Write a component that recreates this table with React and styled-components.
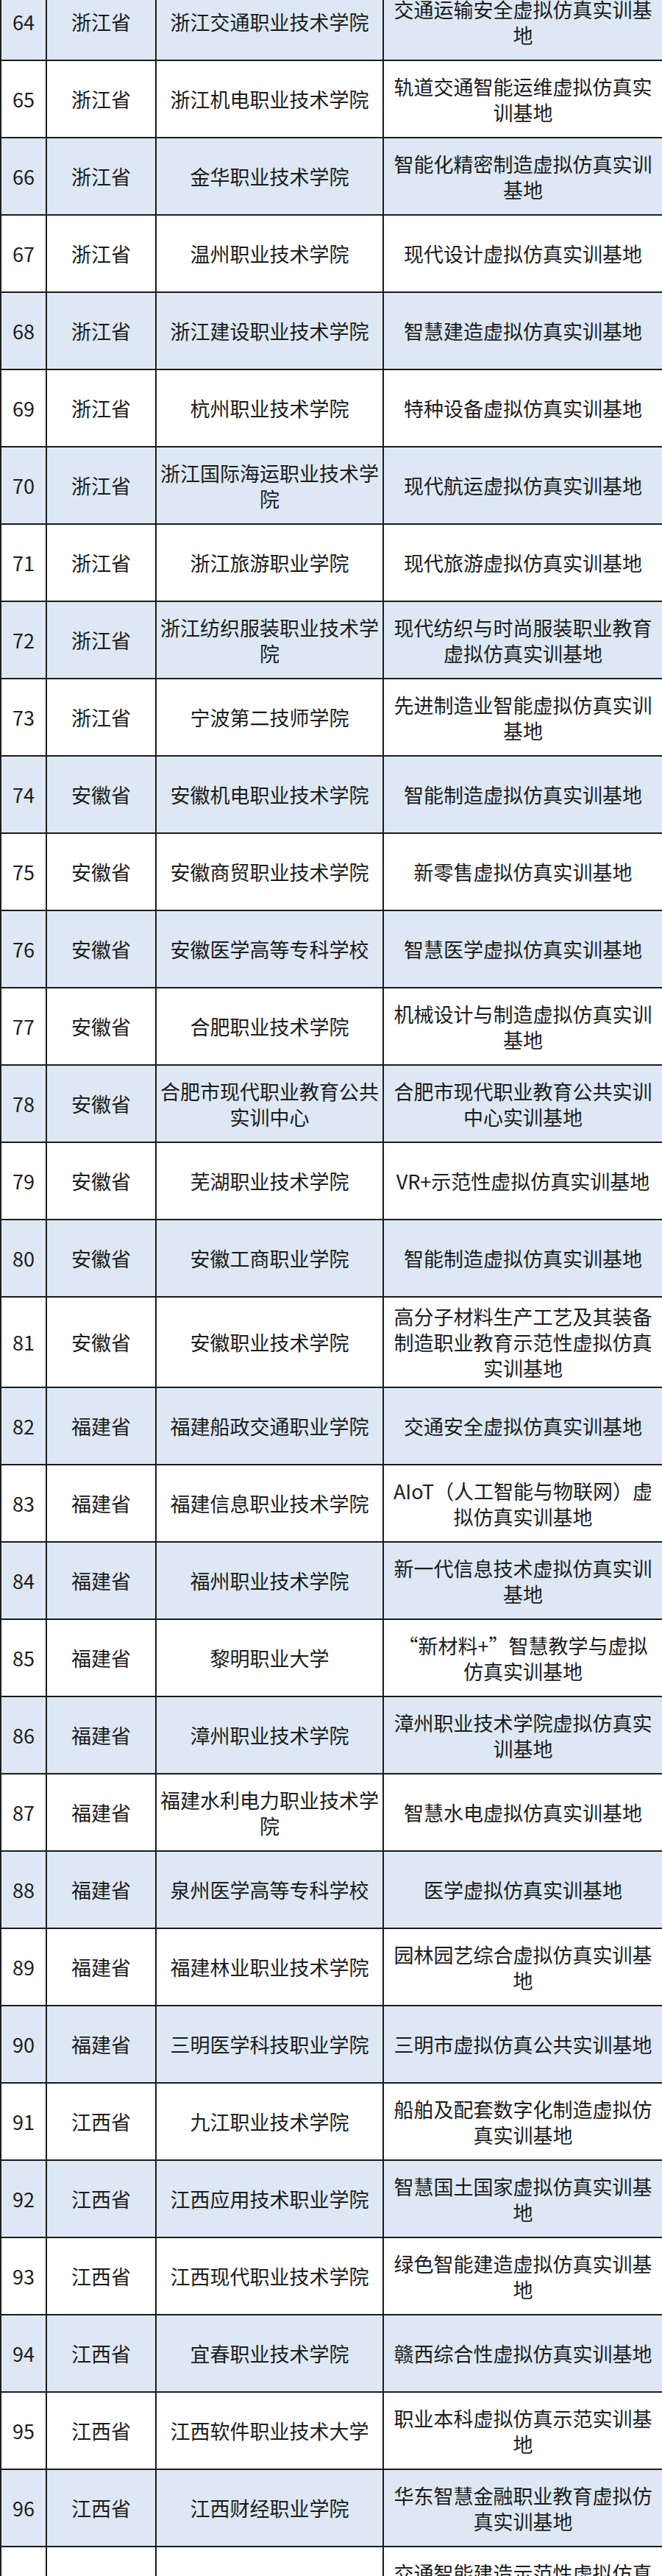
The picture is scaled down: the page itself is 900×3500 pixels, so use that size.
import React from "react";
import styled, { createGlobalStyle } from "styled-components";

const rows = [
  [64, "浙江省", "浙江交通职业技术学院", "交通运输安全虚拟仿真实训基地"],
  [65, "浙江省", "浙江机电职业技术学院", "轨道交通智能运维虚拟仿真实训基地"],
  [66, "浙江省", "金华职业技术学院", "智能化精密制造虚拟仿真实训基地"],
  [67, "浙江省", "温州职业技术学院", "现代设计虚拟仿真实训基地"],
  [68, "浙江省", "浙江建设职业技术学院", "智慧建造虚拟仿真实训基地"],
  [69, "浙江省", "杭州职业技术学院", "特种设备虚拟仿真实训基地"],
  [70, "浙江省", "浙江国际海运职业技术学院", "现代航运虚拟仿真实训基地"],
  [71, "浙江省", "浙江旅游职业学院", "现代旅游虚拟仿真实训基地"],
  [72, "浙江省", "浙江纺织服装职业技术学院", "现代纺织与时尚服装职业教育虚拟仿真实训基地"],
  [73, "浙江省", "宁波第二技师学院", "先进制造业智能虚拟仿真实训基地"],
  [74, "安徽省", "安徽机电职业技术学院", "智能制造虚拟仿真实训基地"],
  [75, "安徽省", "安徽商贸职业技术学院", "新零售虚拟仿真实训基地"],
  [76, "安徽省", "安徽医学高等专科学校", "智慧医学虚拟仿真实训基地"],
  [77, "安徽省", "合肥职业技术学院", "机械设计与制造虚拟仿真实训基地"],
  [78, "安徽省", "合肥市现代职业教育公共实训中心", "合肥市现代职业教育公共实训中心实训基地"],
  [79, "安徽省", "芜湖职业技术学院", "VR+示范性虚拟仿真实训基地"],
  [80, "安徽省", "安徽工商职业学院", "智能制造虚拟仿真实训基地"],
  [81, "安徽省", "安徽职业技术学院", "高分子材料生产工艺及其装备制造职业教育示范性虚拟仿真实训基地"],
  [82, "福建省", "福建船政交通职业学院", "交通安全虚拟仿真实训基地"],
  [83, "福建省", "福建信息职业技术学院", "AIoT（人工智能与物联网）虚拟仿真实训基地"],
  [84, "福建省", "福州职业技术学院", "新一代信息技术虚拟仿真实训基地"],
  [85, "福建省", "黎明职业大学", "“新材料+”智慧教学与虚拟仿真实训基地"],
  [86, "福建省", "漳州职业技术学院", "漳州职业技术学院虚拟仿真实训基地"],
  [87, "福建省", "福建水利电力职业技术学院", "智慧水电虚拟仿真实训基地"],
  [88, "福建省", "泉州医学高等专科学校", "医学虚拟仿真实训基地"],
  [89, "福建省", "福建林业职业技术学院", "园林园艺综合虚拟仿真实训基地"],
  [90, "福建省", "三明医学科技职业学院", "三明市虚拟仿真公共实训基地"],
  [91, "江西省", "九江职业技术学院", "船舶及配套数字化制造虚拟仿真实训基地"],
  [92, "江西省", "江西应用技术职业学院", "智慧国土国家虚拟仿真实训基地"],
  [93, "江西省", "江西现代职业技术学院", "绿色智能建造虚拟仿真实训基地"],
  [94, "江西省", "宜春职业技术学院", "赣西综合性虚拟仿真实训基地"],
  [95, "江西省", "江西软件职业技术大学", "职业本科虚拟仿真示范实训基地"],
  [96, "江西省", "江西财经职业学院", "华东智慧金融职业教育虚拟仿真实训基地"],
  [97, "江西省", "江西交通职业技术学院", "交通智能建造示范性虚拟仿真实训基地"],
];

const GlobalStyle = createGlobalStyle`
  body {
    margin: 0;
    background: #fff;
    overflow: hidden;
  }
`;

const Page = styled.div`
  width: 900px;
  height: 3500px;
  overflow: hidden;
`;

// the list starts mid-page, first row is partly scrolled off
const Table = styled.table`
  width: 900px;
  margin-top: -24px;
  border-collapse: collapse;
  table-layout: fixed;
  font-family: "Noto Sans CJK SC", "Noto Sans", sans-serif;
  font-size: 27px;
  line-height: 35px;
  color: #1b1b1b;
`;

const Col = styled.col`
  width: ${(p) => p.$w}px;
`;

const Row = styled.tr`
  height: 105px;
  background: ${(p) => (p.$shaded ? "#dde8f4" : "#fff")};
`;

const Cell = styled.td`
  border: 2px solid #1c1c1c;
  padding: 8px ${(p) => p.$pad || 4}px;
  text-align: center;
  vertical-align: middle;
  word-break: break-all;
`;

const App = () => (
  <Page>
    <GlobalStyle />
    <Table lang="zh-CN">
      <colgroup>
        <Col $w={62} />
        <Col $w={149} />
        <Col $w={309} />
        <Col $w={380} />
      </colgroup>
      <tbody>
        {rows.map(([no, province, school, base]) => (
          <Row key={no} $shaded={no % 2 === 0}>
            <Cell>{no}</Cell>
            <Cell>{province}</Cell>
            <Cell>{school}</Cell>
            <Cell $pad={8}>{base}</Cell>
          </Row>
        ))}
      </tbody>
    </Table>
  </Page>
);

export default App;
